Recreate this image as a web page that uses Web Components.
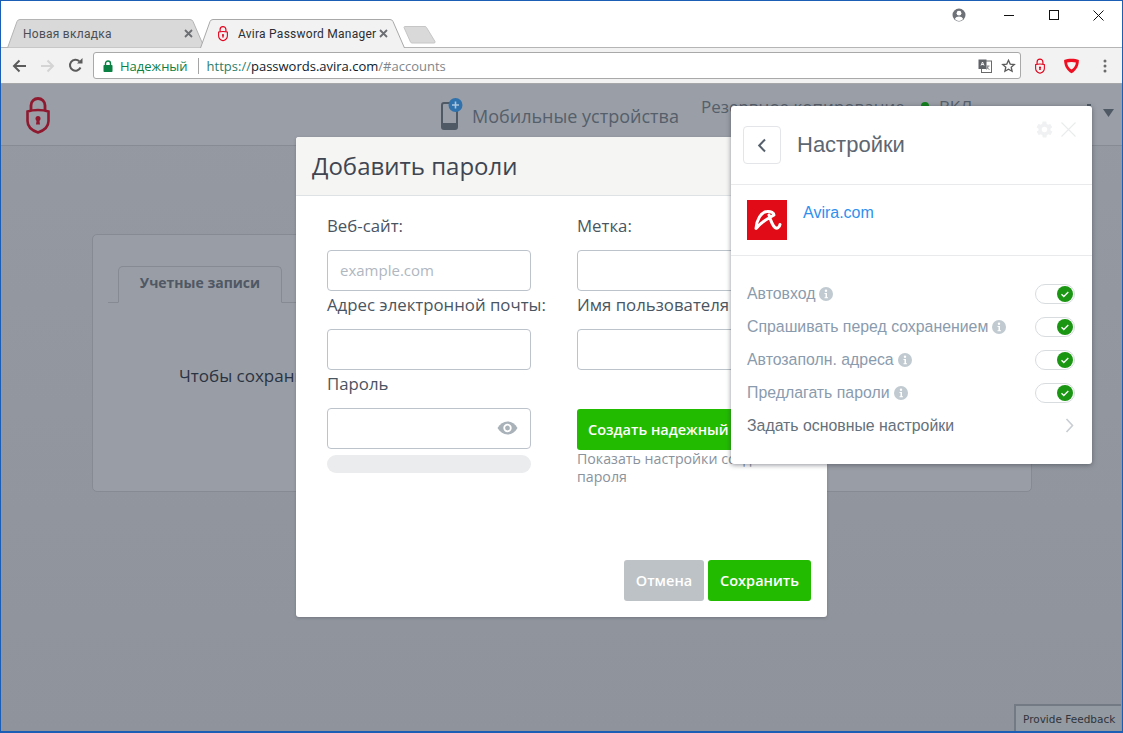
<!DOCTYPE html>
<html lang="ru">
<head>
<meta charset="utf-8">
<title>Avira Password Manager</title>
<style>
  html, body { margin: 0; padding: 0; height: 100%; overflow: hidden; background: #fff; }
  body { font-family: "Open Sans", "Liberation Sans", sans-serif; }
</style>
</head>
<body>
<browser-window>
  <tab-strip slot="tabs"></tab-strip>
  <url-toolbar slot="toolbar"></url-toolbar>
  <accounts-page></accounts-page>
  <add-password-modal></add-password-modal>
  <settings-popup></settings-popup>
  <feedback-tab></feedback-tab>
</browser-window>

<script>
const lockSvg = (color, w, h) => `
<svg style="display:block" width="${w}" height="${h}" viewBox="0 0 24 38" fill="none">
  <path d="M5 15V9.500a7 7 0 0 1 14 0V15" stroke="${color}" stroke-width="2.800"/>
  <path d="M12 14c3.800 0 7.500.5 10.500 1.500V25c0 5.600-4.800 9.600-10.500 11.500C6.300 34.600 1.500 30.600 1.500 25v-9.500C4.500 14.500 8.200 14 12 14z" stroke="${color}" stroke-width="2.600"/>
  <circle cx="12" cy="22.500" r="2.500" fill="${color}"/>
  <path d="M10.800 23h2.400l.8 5.500h-4z" fill="${color}"/>
</svg>`

// -- window frame --------------------------------------------------------
const templateWindow = document.createElement('template')
templateWindow.innerHTML = `
<style>
:host {
  display: flex;
  flex-direction: column;
  box-sizing: border-box;
  width: 1123px;
  height: 733px;
  border: 1px solid #1b5eb5;
  border-bottom-width: 2px;
  background: #fff;
  overflow: hidden;
}
#page {
  position: relative;
  flex: 1;
  min-height: 0;
  overflow: hidden;
  background: linear-gradient(#959aa2, #8f949c);
}
</style>
<slot name="tabs"></slot>
<slot name="toolbar"></slot>
<div id="page"><slot></slot></div>
`

class BrowserWindow extends HTMLElement {
  constructor() {
    super()
    this._root = this.attachShadow({ mode: 'open' })
    this._root.appendChild(templateWindow.content.cloneNode(true))
  }
}
customElements.define('browser-window', BrowserWindow)

// -- one tab --------------------------------------------------------------
const templateTab = document.createElement('template')
templateTab.innerHTML = `
<style>
:host {
  display: flex;
  align-items: center;
  position: relative;
  box-sizing: border-box;
  width: 198px;
  height: 29px;
  padding: 0 12px 0 16px;
  font: 12px Roboto, "Open Sans", sans-serif;
  letter-spacing: .25px;
  color: #4b4f55;
}
:host([active]) { width: 205px; color: #2b2e33; z-index: 1; padding: 0 17px 0 18px; }
svg.shape { position: absolute; left: 0; top: 0; }
#icon { position: relative; margin-right: 10px; display: none; }
:host([active]) #icon { display: block; }
#text { position: relative; flex: 1; white-space: nowrap; overflow: hidden; }
svg.close { position: relative; flex: none; }
</style>
<svg class="shape" height="29">
  <path id="fill" />
</svg>
<span id="icon"></span>
<span id="text"><slot></slot></span>
<svg class="close" width="9" height="9" viewBox="0 0 9 9">
  <path d="M1 1l7 7M8 1l-7 7" stroke="#6b6e73" stroke-width="1.800"/>
</svg>
`

class ChromeTab extends HTMLElement {
  constructor() {
    super()
    this._root = this.attachShadow({ mode: 'open' })
    this._root.appendChild(templateTab.content.cloneNode(true))
  }

  connectedCallback() {
    const active = this.hasAttribute('active')
    const width = active ? 205 : 198
    const fill = this._root.querySelector('#fill')
    // the slanted shape, open along the bottom on the active tab
    const end = active ? '' : 'z'
    fill.setAttribute('d', `M.5 29 10 2.500Q10.800 .5 13 .5H${width - 15}q2.200 0 3 2L${width - .5} 29${end}`)
    fill.setAttribute('fill', active ? '#f2f2f2' : '#d9d9d9')
    fill.setAttribute('stroke', active ? '#a8a8a8' : '#b4b4b4')
    this._root.querySelector('.shape').setAttribute('width', width)
    this._root.querySelector('#icon').innerHTML = lockSvg('#e2001a', 10, 17)
  }
}
customElements.define('chrome-tab', ChromeTab)

// -- tab strip and caption buttons --------------------------------------
const templateStrip = document.createElement('template')
templateStrip.innerHTML = `
<style>
:host {
  display: flex;
  align-items: flex-end;
  flex: none;
  height: 47px;
  padding-left: 6px;
  position: relative;
  background: #fff;
}
#line { position: absolute; left: 0; right: 0; bottom: 0; height: 1px; background: #b5b5b5; }
chrome-tab + chrome-tab { margin-left: -5px; }
#newtab { position: relative; margin-left: -2px; margin-bottom: 4px; }
#caption {
  position: absolute;
  top: 0;
  right: 0;
  display: flex;
  align-items: center;
  height: 28px;
  padding-right: 1px;
}
#caption svg { display: block; }
.btn { width: 45px; display: flex; justify-content: center; }
#user { margin-right: 20px; }
</style>
<div id="line"></div>
<chrome-tab>Новая вкладка</chrome-tab>
<chrome-tab active>Avira Password Manager</chrome-tab>
<svg id="newtab" width="34" height="18" viewBox="0 0 34 18">
  <path d="M1 1.500Q1 .5 2 .5H22q1 0 1.500 1L32 15.500q.5 1.500-1 1.500H9q-1 0-1.500-1z" fill="#d9d9d9" stroke="#c6c6c6"/>
</svg>
<div id="caption">
  <svg id="user" width="14" height="14" viewBox="0 0 14 14">
    <circle cx="7" cy="7" r="6.500" fill="#6e7177"/>
    <circle cx="7" cy="5.200" r="2.400" fill="#fff"/>
    <path d="M2.800 11c.8-1.700 2.400-2.500 4.200-2.500s3.400.8 4.200 2.500A6 6 0 0 1 7 13a6 6 0 0 1-4.200-2z" fill="#fff"/>
  </svg>
  <div class="btn"><svg width="10" height="11" viewBox="0 0 10 11"><path d="M0 5.500h10" stroke="#111"/></svg></div>
  <div class="btn"><svg width="10" height="10" viewBox="0 0 10 10"><rect x=".5" y=".5" width="9" height="9" fill="none" stroke="#111"/></svg></div>
  <div class="btn"><svg width="11" height="11" viewBox="0 0 11 11"><path d="M.5.500l10 10M10.500.5l-10 10" stroke="#111"/></svg></div>
</div>
`

class TabStrip extends HTMLElement {
  constructor() {
    super()
    this._root = this.attachShadow({ mode: 'open' })
    this._root.appendChild(templateStrip.content.cloneNode(true))
  }
}
customElements.define('tab-strip', TabStrip)

// -- address bar ----------------------------------------------------------
const templateToolbar = document.createElement('template')
templateToolbar.innerHTML = `
<style>
:host {
  display: flex;
  align-items: center;
  flex: none;
  box-sizing: border-box;
  height: 36px;
  padding: 0 0 0 11px;
  background: #f2f2f2;
  border-bottom: 1px solid #a5a7a9;
}
svg { display: block; flex: none; }
#nav { display: flex; align-items: center; gap: 13px; margin-right: 10px; }
#omnibox {
  display: flex;
  align-items: center;
  flex: none;
  box-sizing: border-box;
  width: 928px;
  height: 27px;
  padding: 0 4px 0 9px;
  background: #fff;
  border: 1px solid #a9a9a9;
  border-radius: 3px;
  font: 13px "Open Sans", "Liberation Sans", sans-serif;
  white-space: nowrap;
}
#secure { color: #0b8043; margin-left: 7px; }
#sep { width: 1px; height: 16px; background: #a5a5a5; margin: 0 8px 0 10px; }
#url { flex: 1; color: #0c1a2c; }
.dim { color: #2e7d6b; }
.grey { color: #80868b; }
#ext { display: flex; align-items: center; gap: 9px; }
#actions { display: flex; align-items: center; margin-left: 14px; }
#actions .gap1 { margin-right: 18px; }
#actions .gap2 { margin-right: 23px; }
</style>
<div id="nav">
  <svg width="15" height="14" viewBox="0 0 15 14"><path d="M14 7H2M7.500 1.500 2 7l5.500 5.500" fill="none" stroke="#5b5b5b" stroke-width="2"/></svg>
  <svg width="15" height="14" viewBox="0 0 15 14"><path d="M1 7h12M7.500 1.500 13 7l-5.500 5.500" fill="none" stroke="#d4d4d4" stroke-width="2"/></svg>
  <svg width="15" height="15" viewBox="0 0 15 15"><path d="M12.500 9.500A5.500 5.500 0 1 1 11.300 3.200" fill="none" stroke="#5b5b5b" stroke-width="2"/><path d="M9 5.500h5.500V0z" fill="#5b5b5b"/></svg>
</div>
<div id="omnibox">
  <svg width="10" height="12" viewBox="0 0 10 12"><path d="M2.500 5V3.500a2.500 2.500 0 0 1 5 0V5" fill="none" stroke="#0b8043" stroke-width="1.400"/><rect x=".5" y="5" width="9" height="7" rx=".8" fill="#0b8043"/></svg>
  <span id="secure">Надежный</span>
  <span id="sep"></span>
  <span id="url"><span class="dim">https://</span>passwords.avira.com<span class="grey">/#accounts</span></span>
  <div id="ext">
    <svg width="14" height="14" viewBox="0 0 14 14">
      <rect x="3.500" y="2" width="10" height="11.500" fill="#fff" stroke="#6a6a6a"/>
      <rect x=".5" y=".5" width="8" height="9.500" fill="#5f6368"/>
      <path d="M3 6.500 4.500 3 6 6.500M3.500 5.500h2" fill="none" stroke="#fff" stroke-width=".9"/>
      <path d="M8.500 7h3M10 7c0 2-1 3-2 3.500M9 8c.3 1 1.300 2 2.500 2.500" fill="none" stroke="#6a6a6a" stroke-width=".8"/>
    </svg>
    <svg width="15" height="14" viewBox="0 0 14 14"><path d="M7 1.300l1.700 3.800 4.100.4-3.100 2.700.9 4.100L7 10.200l-3.600 2.100.9-4.100L1.200 5.500l4.100-.4z" fill="none" stroke="#5a5a5a" stroke-width="1.300"/></svg>
  </div>
</div>
<div id="actions">
  <span class="gap1" id="lock"></span>
  <svg class="gap2" width="17" height="16" viewBox="0 0 16 16"><path d="M8 .8c2.700 0 5.300.4 7.400 1.200 0 5.700-2.400 10.500-7.400 13.300C3 12.500.6 7.700.6 2 2.700 1.200 5.300.8 8 .8z" fill="#ef0f23"/><path d="M8 3.900c1.700 0 3.200.2 4.400.6-.3 3-1.700 5.400-4.400 7.100-2.700-1.700-4.100-4.100-4.400-7.100 1.200-.4 2.700-.6 4.400-.6z" fill="#f4f4f4"/></svg>
  <svg width="4" height="14" viewBox="0 0 4 14"><circle cx="2" cy="2" r="1.500" fill="#6b6b6b"/><circle cx="2" cy="7" r="1.500" fill="#6b6b6b"/><circle cx="2" cy="12" r="1.500" fill="#6b6b6b"/></svg>
</div>
`

class UrlToolbar extends HTMLElement {
  constructor() {
    super()
    this._root = this.attachShadow({ mode: 'open' })
    this._root.appendChild(templateToolbar.content.cloneNode(true))
    this._root.querySelector('#lock').innerHTML = lockSvg('#e2001a', 10, 16)
  }
}
customElements.define('url-toolbar', UrlToolbar)

// -- dimmed app page behind the modal --------------------------------------
const templatePage = document.createElement('template')
templatePage.innerHTML = `
<style>
:host { display: block; font-family: "Open Sans", "Liberation Sans", sans-serif; }
header {
  display: flex;
  align-items: flex-start;
  box-sizing: border-box;
  height: 62px;
  padding: 12px 0 0 25px;
  background: #9a9ea6;
  border-bottom: 1px solid #868b94;
}
#devices {
  display: flex;
  align-items: center;
  margin-left: 391px;
  margin-top: 6px;
  font-size: 18px;
  color: #555f6b;
  white-space: nowrap;
}
#devices svg { display: block; margin: -4px 6px 0 0; }
#backup {
  display: flex;
  align-items: center;
  margin: -1px 0 0 22px;
  height: 22px;
  font-size: 17px;
  color: #555f6b;
  white-space: nowrap;
}
#dot { width: 8px; height: 8px; border-radius: 50%; background: #12801a; margin: 0 10px 0 16px; }
#caret { position: absolute; left: 1102px; top: 25px; }
#peek { position: absolute; left: 1086px; top: 20px; width: 4px; height: 2px; background: #4f5965; }
#card {
  box-sizing: border-box;
  width: 940px;
  height: 258px;
  margin: 88px 0 0 91px;
  padding-top: 30px;
  background: #999da5;
  border: 1px solid #858a93;
  border-radius: 5px;
}
#tabs {
  display: flex;
  align-items: flex-end;
  height: 37px;
  margin-left: 15px;
  border-bottom: 1px solid #858a93;
}
#tab {
  box-sizing: border-box;
  width: 164px;
  height: 37px;
  margin: 0 0 -1px 10px;
  padding-top: 6px;
  text-align: center;
  font-size: 14px;
  font-weight: 700;
  color: #4f5864;
  background: #999da5;
  border: 1px solid #858a93;
  border-bottom: 1px solid #999da5;
  border-radius: 5px 5px 0 0;
}
#empty {
  margin: 61px 0 0 86px;
  font-size: 17px;
  color: #2a3342;
  white-space: nowrap;
}
</style>
<header>
  <span id="logo"></span>
  <div id="devices">
    <svg width="25" height="32" viewBox="0 0 25 32">
      <rect x="1" y="5" width="15" height="26" rx="2" fill="none" stroke="#4f5965" stroke-width="2"/>
      <rect x="1" y="25" width="15" height="6" fill="#4f5965"/>
      <circle cx="14.500" cy="7" r="7" fill="#2f72ad"/>
      <path d="M14.500 3.500v7M11 7h7" stroke="#a9c4dc" stroke-width="1.600"/>
    </svg>
    <span>Мобильные устройства</span>
  </div>
  <div id="backup">Резервное копирование<span id="dot"></span>ВКЛ</div>
  <span id="peek"></span>
  <svg id="caret" width="11" height="8" viewBox="0 0 11 8"><path d="M0 0h11L5.500 8z" fill="#4f5965"/></svg>
</header>
<div id="card">
  <div id="tabs"><div id="tab">Учетные записи</div></div>
  <div id="empty">Чтобы сохранить</div>
</div>
`

class AccountsPage extends HTMLElement {
  constructor() {
    super()
    this._root = this.attachShadow({ mode: 'open' })
    this._root.appendChild(templatePage.content.cloneNode(true))
    this._root.querySelector('#logo').innerHTML = lockSvg('#8f1a30', 24, 38)
  }
}
customElements.define('accounts-page', AccountsPage)

// -- labelled field --------------------------------------------------------
const templateField = document.createElement('template')
templateField.innerHTML = `
<style>
:host {
  display: block;
  font-family: "Open Sans", "Liberation Sans", sans-serif;
}
label {
  display: block;
  height: 24px;
  margin-bottom: 12px;
  font-size: 16.800px;
  line-height: 24px;
  color: #4a5562;
  white-space: nowrap;
}
#box {
  display: flex;
  align-items: center;
  justify-content: space-between;
  box-sizing: border-box;
  height: 41px;
  padding: 0 12px 2px;
  background: #fff;
  border: 1px solid #bcc3cb;
  border-radius: 4px;
  font-size: 15px;
  color: #b0b7bf;
}
</style>
<label></label>
<div id="box"><span id="hint"></span><slot></slot></div>
`

class FormField extends HTMLElement {
  constructor() {
    super()
    this._root = this.attachShadow({ mode: 'open' })
    this._root.appendChild(templateField.content.cloneNode(true))
  }

  connectedCallback() {
    this._root.querySelector('label').textContent = this.getAttribute('label')
    this._root.querySelector('#hint').textContent = this.getAttribute('hint') || ''
  }
}
customElements.define('form-field', FormField)

// -- button -----------------------------------------------------------------
const templateButton = document.createElement('template')
templateButton.innerHTML = `
<style>
:host {
  display: inline-flex;
  align-items: center;
  justify-content: center;
  box-sizing: border-box;
  height: 41px;
  padding: 0 11px;
  border-radius: 3px;
  background: #22bb00;
  color: #fff;
  font: 600 14.500px "Open Sans", "Liberation Sans", sans-serif;
  white-space: nowrap;
}
:host([muted]) { background: #bdc2c6; }
</style>
<slot></slot>
`

class AppButton extends HTMLElement {
  constructor() {
    super()
    this._root = this.attachShadow({ mode: 'open' })
    this._root.appendChild(templateButton.content.cloneNode(true))
  }
}
customElements.define('app-button', AppButton)

// -- add password modal ------------------------------------------------------
const templateModal = document.createElement('template')
templateModal.innerHTML = `
<style>
:host {
  position: absolute;
  left: 295px;
  top: 53px;
  display: flex;
  flex-direction: column;
  box-sizing: border-box;
  width: 531px;
  height: 480px;
  background: #fff;
  border-radius: 3px;
  box-shadow: 0 1px 3px rgba(60,65,75,.35);
  font-family: "Open Sans", "Liberation Sans", sans-serif;
}
#head {
  box-sizing: border-box;
  height: 59px;
  padding: 11px 16px 0;
  background: #f5f5f3;
  border-bottom: 1px solid #dfe2e5;
  border-radius: 3px 3px 0 0;
  font-size: 24px;
  line-height: 36px;
  color: #3f4652;
}
#form {
  display: grid;
  grid-template-columns: 204px 204px;
  column-gap: 46px;
  row-gap: 2px;
  padding: 18px 0 0 31px;
}
#gen { padding-top: 37px; }
#gen app-button { width: 204px; justify-content: flex-start; }
#gen p {
  width: 225px;
  margin: 0;
  font-size: 14.200px;
  line-height: 18px;
  color: #8a929c;
}
#meter { height: 18px; margin-top: 6px; background: #ebecee; border-radius: 9px; }
#foot {
  display: flex;
  justify-content: flex-end;
  gap: 4px;
  margin-top: auto;
  padding: 0 16px 16px 0;
}
#cancel { width: 80px; }
#save { width: 103px; }
</style>
<div id="head">Добавить пароли</div>
<div id="form">
  <form-field label="Веб-сайт:" hint="example.com"></form-field>
  <form-field label="Метка:"></form-field>
  <form-field label="Адрес электронной почты:"></form-field>
  <form-field label="Имя пользователя"></form-field>
  <div>
    <form-field label="Пароль">
      <svg width="21" height="14" viewBox="0 0 21 14" style="display:block">
        <path d="M.5 7C3 2.800 6.500.5 10.500.5S18 2.800 20.500 7C18 11.200 14.500 13.500 10.500 13.500S3 11.200.5 7z" fill="#a9b1b9"/>
        <circle cx="10.500" cy="7" r="3.300" fill="none" stroke="#fff" stroke-width="1.800"/>
      </svg>
    </form-field>
    <div id="meter"></div>
  </div>
  <div id="gen">
    <app-button>Создать надежный</app-button>
    <p>Показать настройки создания пароля</p>
  </div>
</div>
<div id="foot">
  <app-button id="cancel" muted>Отмена</app-button>
  <app-button id="save">Сохранить</app-button>
</div>
`

class AddPasswordModal extends HTMLElement {
  constructor() {
    super()
    this._root = this.attachShadow({ mode: 'open' })
    this._root.appendChild(templateModal.content.cloneNode(true))
  }
}
customElements.define('add-password-modal', AddPasswordModal)

// -- toggle row -------------------------------------------------------------
const templateRow = document.createElement('template')
templateRow.innerHTML = `
<style>
:host {
  display: flex;
  align-items: center;
  height: 33px;
  font: 15.850px "Liberation Sans", Arial, sans-serif;
  color: #8a9bae;
  white-space: nowrap;
}
#info { display: block; margin-left: 4px; }
#toggle {
  position: relative;
  box-sizing: border-box;
  width: 40px;
  height: 20px;
  margin-left: auto;
  border: 1px solid #d8dcdf;
  border-radius: 10px;
  background: #fff;
}
#toggle svg { position: absolute; right: 1px; top: 1px; display: block; }
</style>
<slot></slot>
<svg id="info" width="14" height="14" viewBox="0 0 14 14">
  <circle cx="7" cy="7" r="7" fill="#c0cad0"/>
  <circle cx="7" cy="3.800" r="1.200" fill="#fff"/>
  <path d="M5.500 6h2.500v4.300h1v1H5.500v-1h1V7h-1z" fill="#fff"/>
</svg>
<div id="toggle">
  <svg width="16" height="16" viewBox="0 0 16 16">
    <circle cx="8" cy="8" r="8" fill="#1a9612"/>
    <path d="M4.500 8.200l2.300 2.300 4.500-4.500" fill="none" stroke="#fff" stroke-width="1.300"/>
  </svg>
</div>
`

class ToggleRow extends HTMLElement {
  constructor() {
    super()
    this._root = this.attachShadow({ mode: 'open' })
    this._root.appendChild(templateRow.content.cloneNode(true))
  }
}
customElements.define('toggle-row', ToggleRow)

// -- extension popup ---------------------------------------------------------
const templatePopup = document.createElement('template')
templatePopup.innerHTML = `
<style>
:host {
  position: absolute;
  left: 730px;
  top: 22px;
  display: block;
  box-sizing: border-box;
  width: 361px;
  height: 358px;
  background: #fff;
  border-radius: 3px;
  box-shadow: 0 1px 5px rgba(50,55,65,.55);
  font-family: "Liberation Sans", Arial, sans-serif;
}
#head {
  position: relative;
  display: flex;
  align-items: center;
  box-sizing: border-box;
  height: 79px;
  padding: 0 0 0 12px;
  border-bottom: 1px solid #e8eaec;
  font-size: 22px;
  color: #5d6772;
}
#back {
  display: flex;
  align-items: center;
  justify-content: center;
  box-sizing: border-box;
  width: 38px;
  height: 38px;
  margin-right: 16px;
  border: 1px solid #e3e5e8;
  border-radius: 4px;
}
#tools { position: absolute; top: 14px; right: 16px; display: flex; align-items: center; gap: 7px; }
#tools svg, #back svg, #site svg { display: block; }
#site {
  display: flex;
  align-items: flex-start;
  gap: 16px;
  box-sizing: border-box;
  height: 71px;
  padding: 15px 0 0 16px;
  border-bottom: 1px solid #e8eaec;
  font-size: 16px;
  color: #2e90ef;
}
#site span { margin-top: 1px; line-height: 24px; }
#rows { padding: 21px 17px 0 16px; }
#more {
  display: flex;
  align-items: center;
  justify-content: space-between;
  height: 33px;
  padding-right: 1px;
  font-size: 15.850px;
  color: #65707b;
}
</style>
<div id="head">
  <div id="back"><svg width="10" height="15" viewBox="0 0 10 15"><path d="M8 1.500 2.200 7.500 8 13.500" fill="none" stroke="#56616d" stroke-width="2"/></svg></div>
  <span>Настройки</span>
  <div id="tools">
    <svg width="19" height="19" viewBox="0 0 24 24"><path fill="#f0f1f2" d="M19.400 13c.1-.3.1-.7.1-1s0-.7-.1-1l2.100-1.600c.2-.2.2-.4.100-.6l-2-3.500c-.1-.2-.4-.3-.6-.2l-2.500 1c-.5-.4-1.100-.7-1.700-1l-.4-2.600c0-.3-.2-.5-.5-.5h-4c-.3 0-.5.2-.5.400l-.4 2.700c-.6.200-1.200.6-1.700 1l-2.500-1c-.2-.1-.5 0-.6.200l-2 3.500c-.1.200-.1.500.1.600L4.600 11c0 .3-.1.700-.1 1s0 .7.100 1l-2.100 1.600c-.2.200-.2.400-.1.600l2 3.500c.1.200.4.300.6.200l2.500-1c.5.400 1.100.7 1.700 1l.4 2.600c0 .3.200.5.500.5h4c.3 0 .5-.2.500-.4l.4-2.700c.6-.2 1.200-.6 1.700-1l2.500 1c.2.100.5 0 .6-.2l2-3.500c.1-.2.1-.5-.1-.6zM12 15.500a3.500 3.500 0 1 1 0-7 3.500 3.500 0 0 1 0 7z"/></svg>
    <svg width="15" height="15" viewBox="0 0 15 15"><path d="M.5.500l14 14M14.500.5l-14 14" stroke="#e9ebed" stroke-width="1.100"/></svg>
  </div>
</div>
<div id="site">
  <svg width="40" height="40" viewBox="0 0 40 40">
    <rect width="40" height="40" fill="#e00b16"/>
    <path d="M9 28.500C9.500 20 14 12 20 11.500 24 11 27 13 27 15 22 18 15 21 9.500 28M22 15C23.500 20 25 25 28 27.500 30 29 32.500 27.500 33 24.500" fill="none" stroke="#fff" stroke-width="3" stroke-linecap="round" stroke-linejoin="round"/>
  </svg>
  <span>Avira.com</span>
</div>
<div id="rows">
  <toggle-row>Автовход</toggle-row>
  <toggle-row>Спрашивать перед сохранением</toggle-row>
  <toggle-row>Автозаполн. адреса</toggle-row>
  <toggle-row>Предлагать пароли</toggle-row>
  <div id="more">
    <span>Задать основные настройки</span>
    <svg width="9" height="15" viewBox="0 0 9 15"><path d="M1.500 1 7.500 7.500 1.500 14" fill="none" stroke="#c8ced3" stroke-width="1.600"/></svg>
  </div>
</div>
`

class SettingsPopup extends HTMLElement {
  constructor() {
    super()
    this._root = this.attachShadow({ mode: 'open' })
    this._root.appendChild(templatePopup.content.cloneNode(true))
  }
}
customElements.define('settings-popup', SettingsPopup)

// -- feedback tab -------------------------------------------------------------
const templateFeedback = document.createElement('template')
templateFeedback.innerHTML = `
<style>
:host {
  position: absolute;
  right: 1px;
  bottom: 0;
  display: flex;
  align-items: center;
  box-sizing: border-box;
  width: 107px;
  height: 27px;
  padding-left: 7px;
  background: #949aa2;
  border: 2px solid #747a83;
  border-width: 2px 0 0 2px;
  font: 10.500px "DejaVu Sans", sans-serif;
  color: #2f343b;
  white-space: nowrap;
}
</style>
<slot>Provide Feedback</slot>
`

class FeedbackTab extends HTMLElement {
  constructor() {
    super()
    this._root = this.attachShadow({ mode: 'open' })
    this._root.appendChild(templateFeedback.content.cloneNode(true))
  }
}
customElements.define('feedback-tab', FeedbackTab)
</script>
</body>
</html>
